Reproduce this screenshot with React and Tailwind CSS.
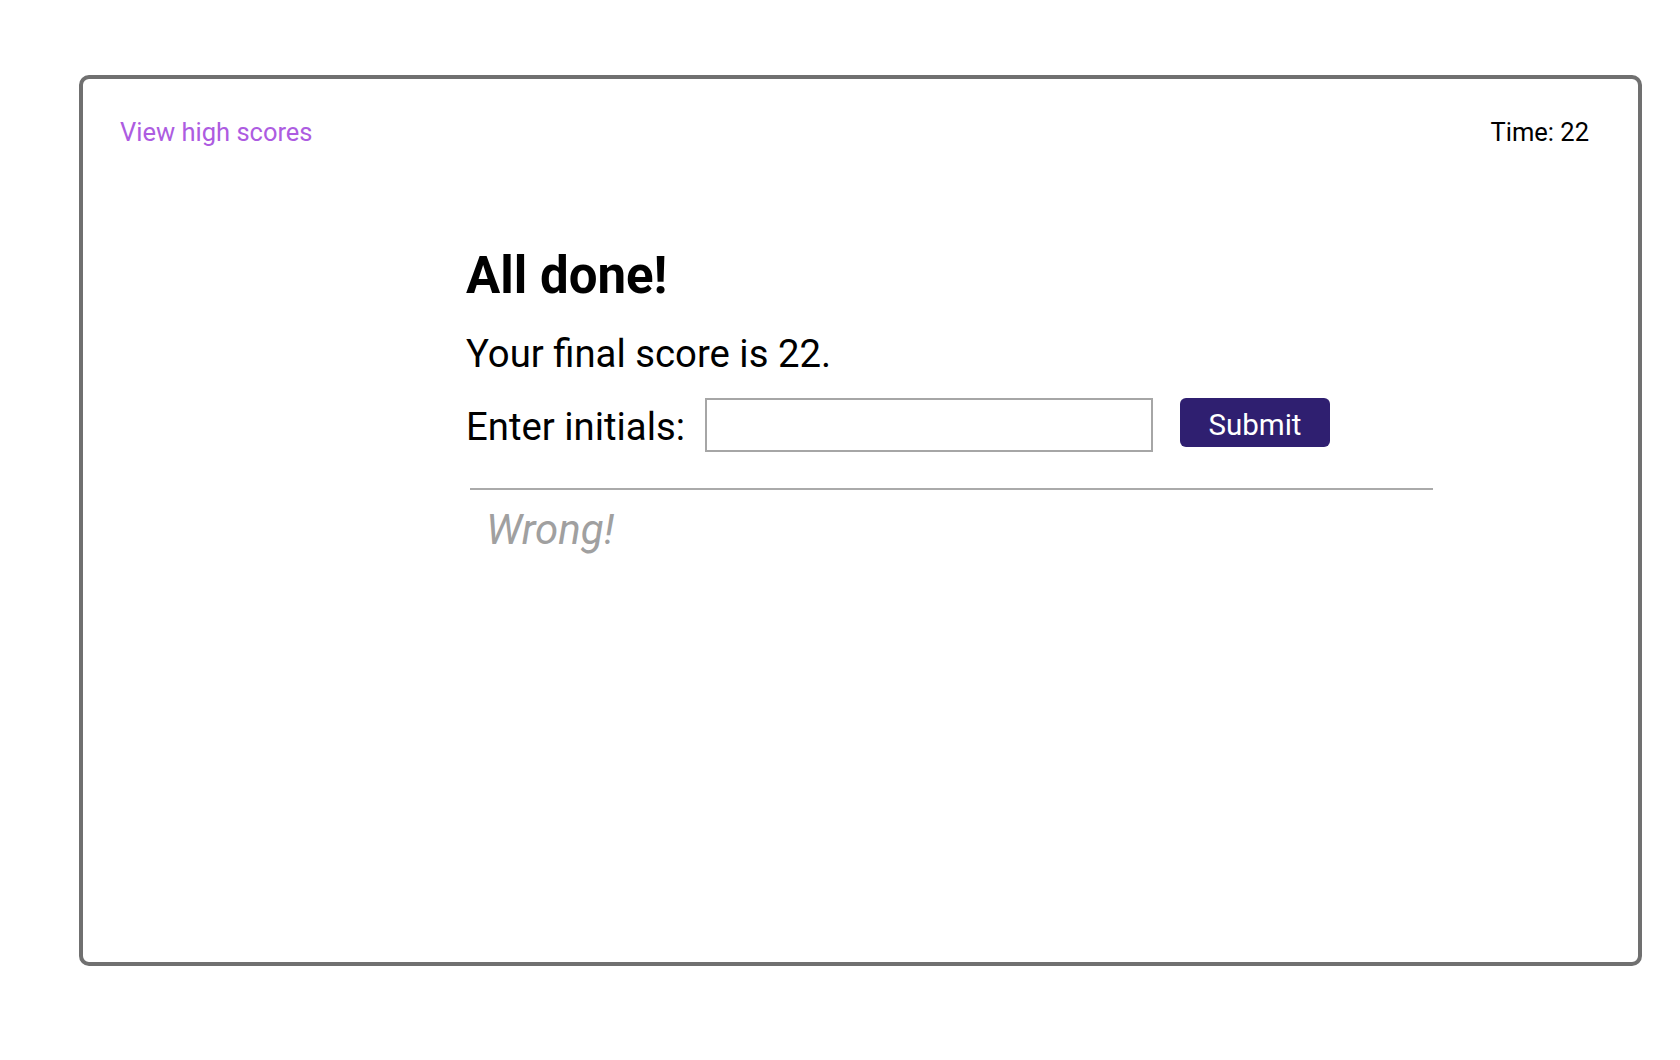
export default function App() {
  return (
    <div className="min-h-[1060px] w-[1680px] bg-white pt-[75px] pl-[79px]" style={{ fontFamily: 'Roboto, "Liberation Sans", sans-serif' }}>
      <div className="w-[1563px] h-[891px] border-4 border-[#707070] rounded-[10px] flex flex-col">
        <div className="flex justify-between pt-[38px] pl-[37px] pr-[49px]">
          <a className="text-[25.5px] leading-[30px] text-[#ad5ce1] cursor-pointer">View high scores</a>
          <div className="text-[25.5px] leading-[30px] text-black">Time: 22</div>
        </div>
        <div className="ml-[383px] mt-[99px] flex flex-col">
          <h1 className="text-[51px] leading-[60px] font-bold text-black">All done!</h1>
          <p className="mt-[25px] text-[38.3px] leading-[46px] text-black">Your final score is 22.</p>
          <div className="mt-[21px] flex items-start">
            <label className="w-[239px] text-[38.3px] leading-[58px] text-black whitespace-nowrap">Enter initials:</label>
            <input type="text" className="w-[448px] h-[54px] border-2 border-[#a6a6a6] bg-white outline-none" />
            <button className="ml-[27px] w-[150px] h-[49px] rounded-[6px] bg-[#2f1f70] text-white text-[29.5px] leading-[49px] pt-[3px]">Submit</button>
          </div>
          <div className="mt-[32px] ml-[4px] w-[963px] border-t-2 border-[#aaaaaa]"></div>
          <div className="mt-[16px] ml-[20px] text-[42px] leading-[48px] italic text-[#a0a0a0]">Wrong!</div>
        </div>
      </div>
    </div>
  );
}
